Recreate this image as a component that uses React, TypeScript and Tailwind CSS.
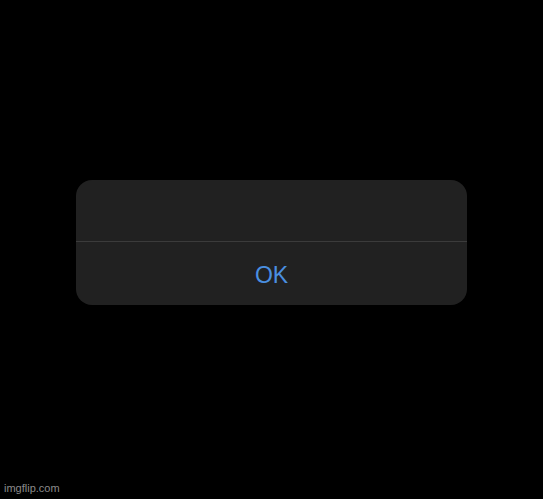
import React from 'react';

const App: React.FC = () => {
  return (
    <div
      className="relative flex h-[499px] w-[543px] flex-col items-center bg-black pt-[180px]"
      style={{ fontFamily: '"Liberation Sans", Arial, sans-serif' }}
    >
      {/* Alert card */}
      <div className="flex w-[391px] flex-col overflow-hidden rounded-[16px] bg-[#212121]">
        <div className="h-[61px]" />
        <div className="h-px bg-[#3b3b3b]" />
        <button className="flex h-[63px] items-center justify-center pt-[3px] text-[23px] text-[#4a8fe0]">
          OK
        </button>
      </div>

      {/* Watermark */}
      <span className="absolute bottom-[3px] left-[4px] text-[11px] text-[#8a8a8a]">
        imgflip.com
      </span>
    </div>
  );
};

export default App;
